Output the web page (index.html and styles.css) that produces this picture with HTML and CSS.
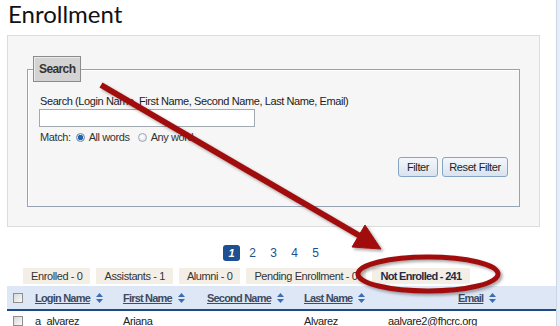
FILE: index.html
```html
<!DOCTYPE html>
<html lang="en">
<head>
    <meta charset="UTF-8">
    <title>Enrollment</title>
    <link rel="stylesheet" href="styles.css">
</head>
<body>

<div class="page">
    <h1 class="title">Enrollment</h1>

    <div class="panel">
        <fieldset class="search">
            <legend>Search</legend>
            <label class="hint" for="query">Search (Login Name, First Name, Second Name, Last Name, Email)</label>
            <input type="text" id="query" class="query">
            <div class="match">
                <span>Match:</span>
                <label><input type="radio" name="match" checked> All words</label>
                <label><input type="radio" name="match"> Any word</label>
            </div>
            <div class="actions">
                <button type="button" class="btn btn-filter">Filter</button>
                <button type="button" class="btn btn-reset">Reset Filter</button>
            </div>
        </fieldset>
    </div>

    <div class="pager">
        <span class="current">1</span>
        <a href="#">2</a>
        <a href="#">3</a>
        <a href="#">4</a>
        <a href="#">5</a>
    </div>

    <div class="tabs">
        <span class="tab">Enrolled - 0</span>
        <span class="tab">Assistants - 1</span>
        <span class="tab">Alumni - 0</span>
        <span class="tab">Pending Enrollment - 0</span>
        <span class="tab active">Not Enrolled - 241</span>
    </div>

    <table class="grid">
        <colgroup>
            <col class="c-check"><col class="c-login"><col class="c-first">
            <col class="c-second"><col class="c-last"><col class="c-email">
        </colgroup>
        <thead>
            <tr>
                <th class="check"><input type="checkbox"></th>
                <th><a href="#">Login Name</a><svg class="sort" viewBox="0 0 7 10"><path d="M0 4L3.5 0L7 4Z M0 6L7 6L3.5 10Z"/></svg></th>
                <th><a href="#">First Name</a><svg class="sort" viewBox="0 0 7 10"><path d="M0 4L3.5 0L7 4Z M0 6L7 6L3.5 10Z"/></svg></th>
                <th><a href="#">Second Name</a><svg class="sort" viewBox="0 0 7 10"><path d="M0 4L3.5 0L7 4Z M0 6L7 6L3.5 10Z"/></svg></th>
                <th><a href="#">Last Name</a><svg class="sort" viewBox="0 0 7 10"><path d="M0 4L3.5 0L7 4Z M0 6L7 6L3.5 10Z"/></svg></th>
                <th class="email-head"><a href="#">Email</a><svg class="sort" viewBox="0 0 7 10"><path d="M0 4L3.5 0L7 4Z M0 6L7 6L3.5 10Z"/></svg></th>
            </tr>
        </thead>
        <tbody>
            <tr>
                <td class="check"><input type="checkbox"></td>
                <td>a_alvarez</td>
                <td>Ariana</td>
                <td></td>
                <td>Alvarez</td>
                <td>aalvare2@fhcrc.org</td>
            </tr>
        </tbody>
    </table>

    <!-- annotation drawn over the page -->
    <svg class="callout" width="560" height="326" viewBox="0 0 560 326">
        <defs>
            <filter id="shade" x="-10%" y="-10%" width="130%" height="130%">
                <feDropShadow dx="2" dy="2" stdDeviation="1.5" flood-color="#000" flood-opacity="0.35"/>
            </filter>
        </defs>
        <g filter="url(#shade)" fill="#a10e0e" stroke="#a10e0e">
            <line x1="101" y1="85" x2="360" y2="236" stroke-width="6"/>
            <polygon points="381,249 352,247 365,225" stroke-width="1"/>
            <ellipse cx="428" cy="274" rx="70" ry="17" fill="none" stroke-width="5"/>
        </g>
    </svg>
</div>

</body>
</html>
```

FILE: styles.css
```css
html {
    background: #e8eef7;
}
body {
    margin: 0;
    font-family: "Liberation Sans", Arial, sans-serif;
    font-size: 11px;
    letter-spacing: -0.4px;
    color: #222;
}
.page {
    position: relative;
    width: 557px;
    height: 326px;
    overflow: hidden;
    background: #fff;
    border-right: 1px solid #c9d6e8;
    box-sizing: border-box;
}
.title {
    margin: 0;
    padding: 0 8px;
    height: 35px;
    font-family: Lato, "Open Sans", sans-serif;
    font-size: 24px;
    font-weight: 400;
    line-height: 28px;
    letter-spacing: 0;
    color: #111;
}

/* search box */
.panel {
    margin-left: 7px;
    width: 533px;
    height: 192px;
    box-sizing: border-box;
    padding: 20px 19px 0 19px;
    background: #f6f6f6;
    border: 1px solid #dcdcdc;
}
.search {
    margin: 0;
    padding: 12px 11px 29px 12px;
    border: 1px solid #97a3b2;
    box-shadow: inset 1px 1px 0 #fff;
}
.search legend {
    margin-left: -7px;
    padding: 0 5px;
    height: 26px;
    box-sizing: border-box;
    line-height: 24px;
    background: #d3d3d3;
    border: 1px solid #8b8b8b;
    box-shadow: inset 1px 1px 0 #ececec;
    font-size: 12px;
    font-weight: bold;
    letter-spacing: -0.6px;
    color: #333;
}
.hint {
    display: block;
    line-height: 14px;
    color: #222;
}
.query {
    display: block;
    margin: 1px 0 0 -1px;
    width: 216px;
    height: 18px;
    box-sizing: border-box;
    border: 1px solid #a3a9b1;
    background: #fff;
}
.match {
    display: flex;
    align-items: center;
    height: 20px;
    color: #333;
}
.match span {
    margin-right: 5px;
}
.match label {
    display: inline-flex;
    align-items: center;
    gap: 4px;
    margin-right: 8px;
}
.match input {
    appearance: none;
    margin: 0;
    width: 9px;
    height: 9px;
    border: 1px solid #9aa6b3;
    border-radius: 50%;
    background: radial-gradient(circle at 40% 40%, #fff, #d9dde2);
}
.match input:checked {
    border-color: #6d87a4;
    background: radial-gradient(circle, #1f65b0 0 2.5px, #dbe8f5 3px);
}
.actions {
    display: flex;
    justify-content: flex-end;
    gap: 4px;
    margin-top: 10px;
}
.btn {
    height: 20px;
    padding: 0;
    border: 1px solid #86a4c4;
    border-radius: 3px;
    background: linear-gradient(#f3f7fb, #d9e3ee);
    font-family: "Liberation Sans", Arial, sans-serif;
    font-size: 11px;
    letter-spacing: -0.4px;
    color: #222;
}
.btn-filter { width: 40px; }
.btn-reset { width: 66px; }

/* pages */
.pager {
    display: flex;
    justify-content: center;
    gap: 4px;
    margin: 18px 0 0 7px;
    width: 533px;
    height: 16px;
    line-height: 16px;
    font-size: 12px;
    letter-spacing: 0;
}
.pager a, .pager .current {
    width: 17px;
    text-align: center;
    color: #1d4f91;
    text-decoration: none;
}
.pager .current {
    background: #1d4f91;
    border-radius: 3px;
    color: #fff;
    font-weight: bold;
    font-style: italic;
    font-size: 11px;
}

.tabs {
    display: flex;
    gap: 6px;
    margin: 7px 0 0 23px;
}
.tab {
    height: 16px;
    line-height: 16px;
    padding: 0 8px;
    background: #f3efe7;
    color: #333;
}
.tab.active {
    padding: 0 9px;
    font-weight: bold;
    letter-spacing: -0.7px;
    color: #1f2c48;
}

/* results */
.grid {
    margin: 2px 0 0 7px;
    width: 550px;
    border-collapse: collapse;
    table-layout: fixed;
}
.c-check { width: 23px; }
.c-login { width: 88px; }
.c-first { width: 84px; }
.c-second { width: 97px; }
.c-last { width: 84px; }
.c-email { width: 174px; }
.grid th {
    height: 23px;
    padding: 0 0 0 5px;
    background: #dde7f5;
    border-bottom: 2px solid #1e4b88;
    text-align: left;
    white-space: nowrap;
}
.grid th a {
    color: #3e4b63;
    font-weight: bold;
    letter-spacing: -0.8px;
}
.grid th.email-head {
    padding-left: 75px;
}
.grid td {
    height: 20px;
    padding: 0 0 0 5px;
    color: #222;
}
.grid .check {
    padding-left: 6px;
}
.grid input[type=checkbox] {
    appearance: none;
    display: block;
    margin: 0;
    width: 10px;
    height: 10px;
    border: 1px solid #8e8e8e;
    background: linear-gradient(135deg, #d8d8d8, #fafafa);
}
.sort {
    width: 7px;
    height: 10px;
    margin-left: 6px;
    vertical-align: -1px;
    fill: #3b6db3;
}

.callout {
    position: absolute;
    left: 0;
    top: 0;
    pointer-events: none;
}
```
